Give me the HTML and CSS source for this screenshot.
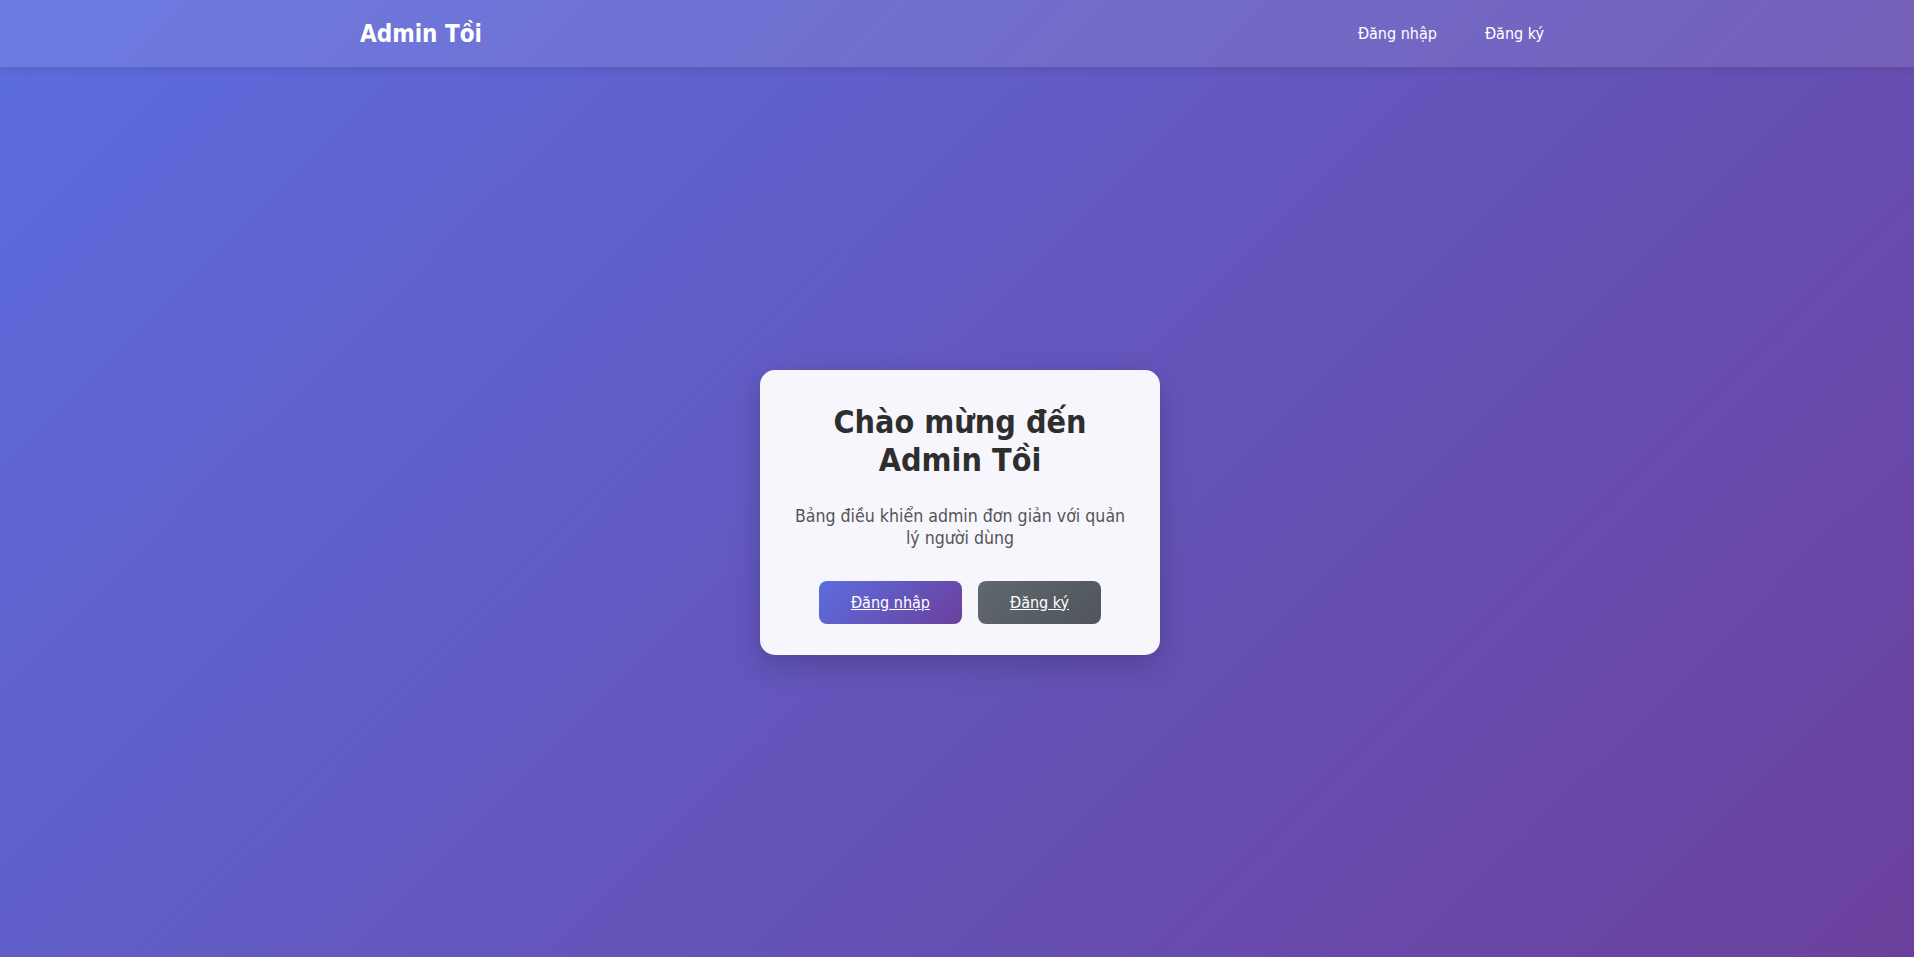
FILE: index.html
```html
<!DOCTYPE html>
<html lang="vi">
<head>
<meta charset="utf-8">
<title>Admin Tồi</title>
<link rel="stylesheet" href="styles.css">
</head>
<body>
<header class="site-header">
  <div class="container header-inner">
    <a class="logo" href="#">Admin Tồi</a>
    <nav class="nav">
      <a class="nav-link" href="#">Đăng nhập</a>
      <a class="nav-link" href="#">Đăng ký</a>
    </nav>
  </div>
</header>
<main class="main">
  <div class="card">
    <h1 class="card-title">Chào mừng đến Admin Tồi</h1>
    <p class="card-text">Bảng điều khiển admin đơn giản với quản lý người dùng</p>
    <div class="actions">
      <a class="btn btn-primary" href="#">Đăng nhập</a>
      <a class="btn btn-secondary" href="#">Đăng ký</a>
    </div>
  </div>
</main>
</body>
</html>
```
FILE: styles.css
```css
* { box-sizing: border-box; }
html, body { height: 100%; }
body {
  margin: 0;
  font-family: "DejaVu Sans Condensed", "DejaVu Sans", sans-serif;
  font-stretch: condensed;
  background: linear-gradient(135deg, #5c6ddf 0%, #6b409c 100%);
  background-attachment: fixed;
  min-height: 100vh;
  color: #333;
}
.site-header {
  background: rgba(255, 255, 255, 0.1);
  box-shadow: 0 2px 10px rgba(0, 0, 0, 0.1);
  padding: 1rem 0;
}
.container {
  max-width: 1206px;
  margin: 0 auto;
  padding-left: 6px;
}
.header-inner {
  display: flex;
  align-items: center;
  justify-content: space-between;
}
.logo {
  color: #fff;
  font-size: 24px;
  font-weight: bold;
  text-decoration: none;
}
.nav {
  display: flex;
  gap: 16px;
}
.nav-link {
  color: #fff;
  text-decoration: none;
  font-size: 16px;
  padding: 8px 16px;
}
.main {
  min-height: calc(100vh - 66px);
  display: flex;
  align-items: center;
  justify-content: center;
  padding-left: 6px;
}
.card {
  width: 400px;
  background: rgba(255, 255, 255, 0.95);
  border-radius: 15px;
  padding: 34px 32px 31px;
  text-align: center;
  box-shadow: 0 10px 30px rgba(0, 0, 0, 0.2);
}
.card-title {
  margin: 0 0 26px;
  font-size: 32px;
  font-weight: bold;
  color: #2e2e2e;
  line-height: 1.164;
}
.card-text {
  margin: 0 0 32px;
  font-size: 17.6px;
  line-height: 22px;
  color: #555;
}
.actions {
  display: flex;
  justify-content: center;
  gap: 16px;
}
.btn {
  display: inline-block;
  padding: 12px 32px;
  border-radius: 8px;
  color: #fff;
  font-size: 16px;
  text-decoration: underline;
}
.btn-primary {
  background: linear-gradient(135deg, #5c6ddf 0%, #6b409c 100%);
}
.btn-secondary {
  background: linear-gradient(135deg, #60676e 0%, #4f555b 100%);
}
```
